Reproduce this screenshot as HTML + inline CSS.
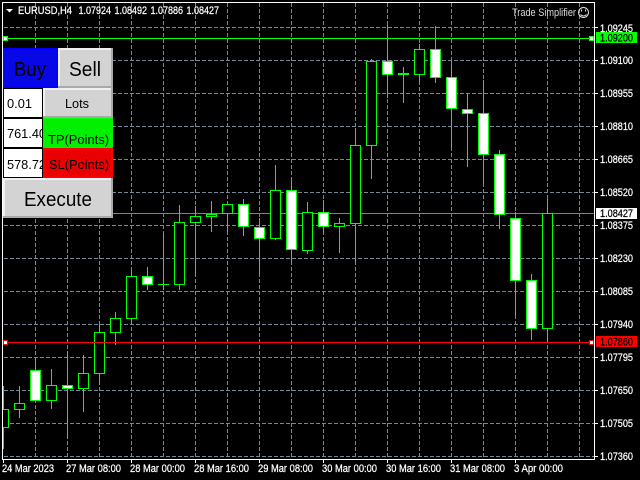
<!DOCTYPE html>
<html>
<head>
<meta charset="utf-8">
<style>
html,body{margin:0;padding:0;background:#000;width:640px;height:480px;overflow:hidden}
svg{display:block;position:absolute;left:0;top:0}
text{font-family:"Liberation Sans",sans-serif;fill:#fff;font-size:11px}
.l{stroke:#fff;stroke-width:.25px}
.d{fill:#000;stroke:#000;stroke-width:.25px}
.g{stroke:#778899;stroke-width:1;stroke-dasharray:4 2;fill:none}
.w{stroke:#0f0;stroke-width:1;fill:none}
.k{stroke:#0f0;stroke-width:1;fill:#000}
.u{stroke:#0f0;stroke-width:1;fill:#fff}
</style>
</head>
<body>
<svg width="640" height="480" viewBox="0 0 640 480" shape-rendering="crispEdges">
<defs><clipPath id="c"><rect x="3" y="3" width="591" height="456"/></clipPath>
<clipPath id="e1"><rect x="4" y="119" width="38" height="28"/></clipPath>
<clipPath id="e2"><rect x="4" y="149" width="38" height="28"/></clipPath></defs>
<rect width="640" height="480" fill="#000"/>

<!-- grid -->
<path class="g" d="M4 27.5H594M4 60.5H594M4 93.5H594M4 126.5H594M4 159.5H594M4 192.5H594M4 225.5H594M4 258.5H594M4 291.5H594M4 324.5H594M4 357.5H594M4 390.5H594M4 423.5H594M4 456.5H594"/>
<path class="g" d="M35.5 3V459M67.5 3V459M99.5 3V459M131.5 3V459M163.5 3V459M195.5 3V459M227.5 3V459M259.5 3V459M291.5 3V459M323.5 3V459M355.5 3V459M387.5 3V459M419.5 3V459M451.5 3V459M483.5 3V459M515.5 3V459M547.5 3V459M579.5 3V459"/>

<!-- current price line -->
<rect x="3" y="213" width="591" height="1" fill="#808080"/>

<g clip-path="url(#c)">
<!-- wicks -->
<path class="w" d="M3.5 386V449M19.5 386V418M35.5 358V400M51.5 369V409M67.5 352V439M83.5 355V412M99.5 324V383M115.5 312V345M131.5 270V324M147.5 267V290M163.5 234V290M179.5 205V290M195.5 206V276M211.5 201V232M227.5 204V232M243.5 199V236M259.5 218V274M275.5 165V240M291.5 178V262M307.5 202V254M323.5 200V233M339.5 218V253M355.5 128V262M371.5 59V179M387.5 25V98M403.5 67V103M419.5 44V82M435.5 26V83M451.5 60V148M467.5 93V167M483.5 80V184M499.5 150V229M515.5 212V316M531.5 274V340M547.5 199V343"/>
<!-- bodies -->
<rect class="k" x="-1.5" y="409.5" width="10" height="18"/>
<rect class="k" x="14.5" y="403.5" width="10" height="6"/>
<rect class="u" x="30.5" y="370.5" width="10" height="30"/>
<rect class="k" x="46.5" y="385.5" width="10" height="15"/>
<rect class="u" x="62.5" y="385.5" width="10" height="3"/>
<rect class="k" x="78.5" y="373.5" width="10" height="15"/>
<rect class="k" x="94.5" y="332.5" width="10" height="41"/>
<rect class="k" x="110.5" y="318.5" width="10" height="14"/>
<rect class="k" x="126.5" y="276.5" width="10" height="42"/>
<rect class="u" x="142.5" y="276.5" width="10" height="8"/>
<rect x="158" y="284" width="11" height="1" fill="#0f0"/>
<rect class="k" x="174.5" y="222.5" width="10" height="62"/>
<rect class="k" x="190.5" y="216.5" width="10" height="6"/>
<rect class="k" x="206.5" y="214.5" width="10" height="2"/>
<rect class="k" x="222.5" y="204.5" width="10" height="9"/>
<rect class="u" x="238.5" y="204.5" width="10" height="22"/>
<rect class="u" x="254.5" y="227.5" width="10" height="11"/>
<rect class="k" x="270.5" y="190.5" width="10" height="48"/>
<rect class="u" x="286.5" y="190.5" width="10" height="59"/>
<rect class="k" x="302.5" y="212.5" width="10" height="38"/>
<rect class="u" x="318.5" y="212.5" width="10" height="14"/>
<rect class="k" x="334.5" y="223.5" width="10" height="3"/>
<rect class="k" x="350.5" y="145.5" width="10" height="78"/>
<rect class="k" x="366.5" y="61.5" width="10" height="84"/>
<rect class="u" x="382.5" y="61.5" width="10" height="13"/>
<rect x="398" y="73" width="11" height="2" fill="#0f0"/>
<rect class="k" x="414.5" y="49.5" width="10" height="25"/>
<rect class="u" x="430.5" y="49.5" width="10" height="28"/>
<rect class="u" x="446.5" y="77.5" width="10" height="31"/>
<rect class="u" x="462.5" y="109.5" width="10" height="4"/>
<rect class="u" x="478.5" y="113.5" width="10" height="41"/>
<rect class="u" x="494.5" y="154.5" width="10" height="60"/>
<rect class="u" x="510.5" y="218.5" width="10" height="62"/>
<rect class="u" x="526.5" y="280.5" width="10" height="48"/>
<rect class="k" x="542.5" y="213.5" width="10" height="115"/>
</g>

<!-- TP / SL lines -->
<rect x="3" y="38" width="591" height="1" fill="#0f0"/>
<rect x="3" y="342" width="591" height="1" fill="#f00"/>
<rect x="3.5" y="36.5" width="4" height="4" fill="#fff" stroke="#0f0"/>
<rect x="589.5" y="36.5" width="4" height="4" fill="#fff" stroke="#0f0"/>
<rect x="3.5" y="340.5" width="4" height="4" fill="#fff" stroke="#f00"/>
<rect x="589.5" y="340.5" width="4" height="4" fill="#fff" stroke="#f00"/>

<!-- frame -->
<rect x="2" y="2" width="593" height="1" fill="#fff"/>
<rect x="2" y="2" width="1" height="458" fill="#fff"/>
<rect x="594" y="2" width="1" height="458" fill="#fff"/>
<rect x="2" y="459" width="593" height="1" fill="#fff"/>
<!-- ticks -->
<path stroke="#fff" fill="none" d="M595 27.5H598M595 60.5H598M595 93.5H598M595 126.5H598M595 159.5H598M595 192.5H598M595 225.5H598M595 258.5H598M595 291.5H598M595 324.5H598M595 357.5H598M595 390.5H598M595 423.5H598M595 456.5H598"/>
<path stroke="#fff" fill="none" d="M3.5 460V463M67.5 460V463M131.5 460V463M195.5 460V463M259.5 460V463M323.5 460V463M387.5 460V463M451.5 460V463M515.5 460V463"/>

<!-- price labels -->
<rect x="596" y="32" width="41" height="11" fill="#0f0"/>
<rect x="596" y="208" width="41" height="11" fill="#fff"/>
<rect x="596" y="336" width="41" height="11" fill="#f00"/>
<text class="l" x="600" y="32" textLength="33" lengthAdjust="spacingAndGlyphs">1.09245</text>
<text class="d" x="600" y="41.5" textLength="33" lengthAdjust="spacingAndGlyphs">1.09200</text>
<text class="l" x="600" y="64" textLength="33" lengthAdjust="spacingAndGlyphs">1.09100</text>
<text class="l" x="600" y="97" textLength="33" lengthAdjust="spacingAndGlyphs">1.08955</text>
<text class="l" x="600" y="130" textLength="33" lengthAdjust="spacingAndGlyphs">1.08810</text>
<text class="l" x="600" y="163" textLength="33" lengthAdjust="spacingAndGlyphs">1.08665</text>
<text class="l" x="600" y="196" textLength="33" lengthAdjust="spacingAndGlyphs">1.08520</text>
<text class="d" x="600" y="217" textLength="33" lengthAdjust="spacingAndGlyphs">1.08427</text>
<text class="l" x="600" y="229" textLength="33" lengthAdjust="spacingAndGlyphs">1.08375</text>
<text class="l" x="600" y="262" textLength="33" lengthAdjust="spacingAndGlyphs">1.08230</text>
<text class="l" x="600" y="295" textLength="33" lengthAdjust="spacingAndGlyphs">1.08085</text>
<text class="l" x="600" y="328" textLength="33" lengthAdjust="spacingAndGlyphs">1.07940</text>
<text class="d" x="600" y="345.5" textLength="33" lengthAdjust="spacingAndGlyphs">1.07860</text>
<text class="l" x="600" y="361" textLength="33" lengthAdjust="spacingAndGlyphs">1.07795</text>
<text class="l" x="600" y="394" textLength="33" lengthAdjust="spacingAndGlyphs">1.07650</text>
<text class="l" x="600" y="427" textLength="33" lengthAdjust="spacingAndGlyphs">1.07505</text>
<text class="l" x="600" y="460" textLength="33" lengthAdjust="spacingAndGlyphs">1.07360</text>

<!-- time labels -->
<text class="l" x="2" y="472" textLength="52" lengthAdjust="spacingAndGlyphs">24 Mar 2023</text>
<text class="l" x="66" y="472" textLength="55" lengthAdjust="spacingAndGlyphs">27 Mar 08:00</text>
<text class="l" x="130" y="472" textLength="55" lengthAdjust="spacingAndGlyphs">28 Mar 00:00</text>
<text class="l" x="194" y="472" textLength="55" lengthAdjust="spacingAndGlyphs">28 Mar 16:00</text>
<text class="l" x="258" y="472" textLength="55" lengthAdjust="spacingAndGlyphs">29 Mar 08:00</text>
<text class="l" x="322" y="472" textLength="55" lengthAdjust="spacingAndGlyphs">30 Mar 00:00</text>
<text class="l" x="386" y="472" textLength="55" lengthAdjust="spacingAndGlyphs">30 Mar 16:00</text>
<text class="l" x="450" y="472" textLength="55" lengthAdjust="spacingAndGlyphs">31 Mar 08:00</text>
<text class="l" x="514" y="472" textLength="49" lengthAdjust="spacingAndGlyphs">3 Apr 00:00</text>

<!-- header -->
<path d="M6 9H13L9.5 12.5Z" fill="#fff" shape-rendering="auto"/>
<text class="l" x="18" y="14" textLength="54" lengthAdjust="spacingAndGlyphs">EURUSD,H4</text>
<text class="l" x="78.5" y="14" textLength="32.5" lengthAdjust="spacingAndGlyphs">1.07924</text>
<text class="l" x="114.5" y="14" textLength="32.5" lengthAdjust="spacingAndGlyphs">1.08492</text>
<text class="l" x="150.5" y="14" textLength="32.5" lengthAdjust="spacingAndGlyphs">1.07886</text>
<text class="l" x="186.5" y="14" textLength="32.5" lengthAdjust="spacingAndGlyphs">1.08427</text>
<text x="512" y="16" textLength="64" lengthAdjust="spacingAndGlyphs" style="fill:#d8d8d8">Trade Simplifier</text>
<g fill="none" stroke="#ddd" shape-rendering="auto">
<circle cx="583.5" cy="12.5" r="5"/>
<path d="M580.5 14.5Q583.5 17.5 586.5 14.5"/>
<path d="M581.5 9.5V11.5M585.5 9.5V11.5"/>
</g>

<!-- panel -->
<rect x="3" y="48" width="110" height="170" fill="#000"/>
<!-- Buy -->
<rect x="3" y="48" width="55" height="40" fill="#0000ff"/>
<rect x="3" y="50" width="53" height="36" fill="#0808e6"/>
<text x="14" y="76" style="font-size:20px;fill:#000" textLength="32" lengthAdjust="spacingAndGlyphs">Buy</text>
<!-- Sell -->
<rect x="58" y="48" width="55" height="40" fill="#a9a9a9"/>
<rect x="58" y="48" width="53" height="2" fill="#f0f0f0"/>
<rect x="58" y="48" width="2" height="38" fill="#f0f0f0"/>
<rect x="60" y="50" width="51" height="36" fill="#d3d3d3"/>
<text x="69" y="76" style="font-size:20px;fill:#000" textLength="32" lengthAdjust="spacingAndGlyphs">Sell</text>
<!-- lots input -->
<rect x="4" y="89" width="38" height="28" fill="#fff"/>
<text x="7" y="108" style="font-size:13px;fill:#000" textLength="25" lengthAdjust="spacingAndGlyphs">0.01</text>
<!-- Lots -->
<rect x="43" y="88" width="70" height="30" fill="#a9a9a9"/>
<rect x="43" y="88" width="68" height="2" fill="#f0f0f0"/>
<rect x="43" y="88" width="2" height="28" fill="#f0f0f0"/>
<rect x="45" y="90" width="66" height="26" fill="#d3d3d3"/>
<text x="65" y="108" style="font-size:13px;fill:#000" textLength="24" lengthAdjust="spacingAndGlyphs">Lots</text>
<!-- TP input -->
<rect x="4" y="119" width="38" height="28" fill="#fff"/>
<g clip-path="url(#e1)"><text x="7" y="138" style="font-size:13px;fill:#000" textLength="39" lengthAdjust="spacingAndGlyphs">761.40</text></g>
<!-- TP -->
<rect x="43" y="118" width="70" height="30" fill="#00f000"/>
<rect x="43" y="118" width="70" height="1" fill="#0f0"/>
<text x="48" y="144" style="font-size:13px;fill:#000" textLength="61" lengthAdjust="spacingAndGlyphs">TP(Points)</text>
<!-- SL input -->
<rect x="4" y="149" width="38" height="28" fill="#fff"/>
<g clip-path="url(#e2)"><text x="7" y="169" style="font-size:13px;fill:#000" textLength="39" lengthAdjust="spacingAndGlyphs">578.72</text></g>
<!-- SL -->
<rect x="43" y="148" width="70" height="30" fill="#f00"/>
<rect x="45" y="150" width="66" height="26" fill="#ea0000"/>
<text x="49" y="169" style="font-size:13px;fill:#000" textLength="60" lengthAdjust="spacingAndGlyphs">SL(Points)</text>
<!-- Execute -->
<rect x="3" y="178" width="110" height="40" fill="#a9a9a9"/>
<rect x="3" y="178" width="108" height="2" fill="#f0f0f0"/>
<rect x="3" y="178" width="2" height="38" fill="#f0f0f0"/>
<rect x="5" y="180" width="106" height="36" fill="#d3d3d3"/>
<text x="24" y="206" style="font-size:20px;fill:#000" textLength="68" lengthAdjust="spacingAndGlyphs">Execute</text>
</svg>
</body>
</html>
